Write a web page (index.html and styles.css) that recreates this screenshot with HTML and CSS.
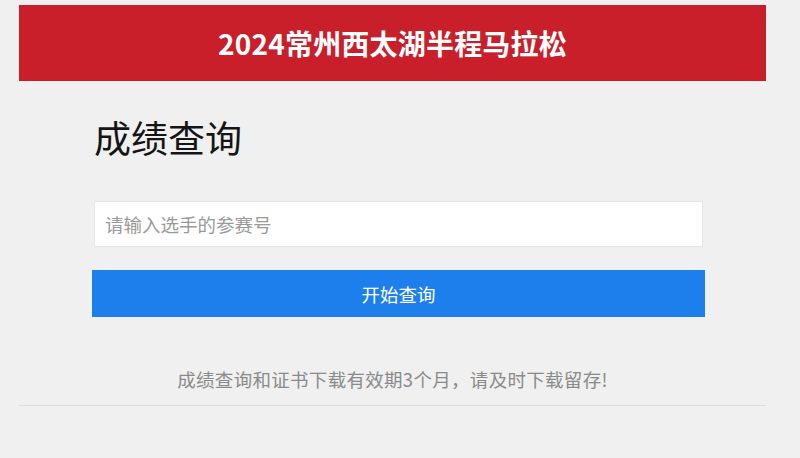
FILE: index.html
```html
<!DOCTYPE html>
<html lang="zh-CN">
<head>
<meta charset="utf-8">
<title>2024常州西太湖半程马拉松 成绩查询</title>
<link rel="stylesheet" href="styles.css">
</head>
<body>
<div class="page">
  <header class="banner">
    <h1 class="banner-title">2024常州西太湖半程马拉松</h1>
  </header>
  <main class="content">
    <div class="form">
      <h2 class="heading">成绩查询</h2>
      <input class="bib-input" type="text" placeholder="请输入选手的参赛号">
      <button class="submit" type="button">开始查询</button>
    </div>
    <p class="notice">成绩查询和证书下载有效期3个月，请及时下载留存!</p>
  </main>
</div>
</body>
</html>
```
FILE: styles.css
```css
html, body {
  margin: 0;
  padding: 0;
  background: #f0f0f0;
  font-family: "Noto Sans CJK SC", "Microsoft YaHei", sans-serif;
}
.page {
  width: 747px;
  margin: 0 0 0 19px;
  padding-top: 5px;
}
.banner {
  background: #c81f2b;
  height: 76px;
  display: flex;
  align-items: center;
  justify-content: center;
}
.banner-title {
  margin: 0;
  color: #ffffff;
  font-size: 28px;
  font-weight: 700;
  line-height: 36px;
  letter-spacing: 0.2px;
}
.content {
  border-bottom: 1px solid #dedede;
}
.form {
  width: 613px;
  margin-left: 73px;
  display: flex;
  flex-direction: column;
}
.heading {
  margin: 34px 0 0 2px;
  font-size: 37px;
  font-weight: 400;
  line-height: 44px;
  color: #151515;
}
.bib-input {
  margin: 42px 2px 0;
  height: 46px;
  box-sizing: border-box;
  border: 1px solid #e4e4e4;
  background: #ffffff;
  padding: 0 10px;
  font-family: inherit;
  font-size: 18.5px;
  color: #333;
  outline: none;
}
.bib-input::placeholder {
  color: #9a9a9a;
}
.submit {
  margin-top: 23px;
  height: 47px;
  border: none;
  background: #1d7fec;
  color: #ffffff;
  font-family: inherit;
  font-size: 18.5px;
  padding: 0;
}
.notice {
  margin: 50px 0 0;
  padding-bottom: 14px;
  text-align: center;
  font-size: 18.5px;
  line-height: 24px;
  letter-spacing: 0.3px;
  color: #8a8a8a;
}
```
